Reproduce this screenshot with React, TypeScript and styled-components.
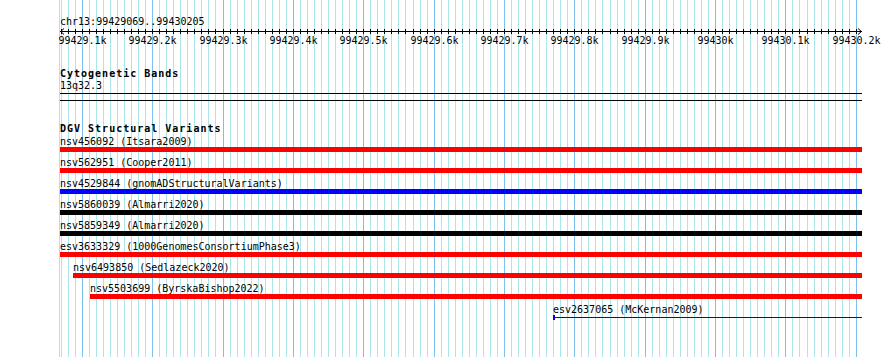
import styled, { createGlobalStyle } from 'styled-components';

const VIEW_START = 99429069
const VIEW_END = 99430205
const PX_PER_BP = 0.7036
const VIEW_W = 802
const LEFT = 60

const toX = (bp: number) => (bp - VIEW_START) * PX_PER_BP

type Feature = {
    name: string
    study: string
    start: number
    end: number
    color: string
    thin?: boolean
}

const features: Feature[] = [
    { name: 'nsv456092', study: 'Itsara2009', start: 99428900, end: 99431000, color: '#ff0000' },
    { name: 'nsv562951', study: 'Cooper2011', start: 99428700, end: 99431200, color: '#ff0000' },
    { name: 'nsv4529844', study: 'gnomADStructuralVariants', start: 99428800, end: 99430900, color: '#0000ff' },
    { name: 'nsv5860039', study: 'Almarri2020', start: 99428600, end: 99431100, color: '#000000' },
    { name: 'nsv5859349', study: 'Almarri2020', start: 99428650, end: 99431150, color: '#000000' },
    { name: 'esv3633329', study: '1000GenomesConsortiumPhase3', start: 99429000, end: 99430800, color: '#ff0000' },
    { name: 'nsv6493850', study: 'Sedlazeck2020', start: 99429087, end: 99430700, color: '#ff0000' },
    { name: 'nsv5503699', study: 'ByrskaBishop2022', start: 99429112, end: 99430650, color: '#ff0000' },
    { name: 'esv2637065', study: 'McKernan2009', start: 99429770, end: 99431500, color: '#0000ff', thin: true },
]

const GlobalStyle = createGlobalStyle`
    html, body {
        margin: 0;
        padding: 0;
        background: #fff;
    }
    body {
        font-family: "DejaVu Sans Mono", "Liberation Mono", monospace;
        color: #000;
    }
`

const Page = styled.div`
    position: relative;
    width: 890px;
    height: 357px;
    overflow: hidden;
    background: #fff;
`

// grid lines sit behind all the tracks
const GridLayer = styled.svg`
    position: absolute;
    left: 0;
    top: 0;
    z-index: 0;
`

const Content = styled.div`
    position: relative;
    z-index: 1;
    display: flex;
    flex-direction: column;
    width: ${VIEW_W}px;
    padding: 16px 0 0 ${LEFT}px;
`

const Location = styled.div`
    font-size: 10px;
    line-height: 12px;
    white-space: nowrap;
`

const RulerSvg = styled.svg`
    display: block;
    overflow: visible;
`

const Track = styled.div<{ $gap: number }>`
    display: flex;
    flex-direction: column;
    margin-top: ${({ $gap }) => $gap}px;
`

const TrackTitle = styled.div`
    font-size: 10px;
    font-weight: bold;
    letter-spacing: 1px;
    line-height: 12px;
    white-space: nowrap;
`

const BandLabel = styled.div`
    font-size: 10px;
    line-height: 12px;
`

const Band = styled.div`
    margin-top: 1px;
    height: 6px;
    border-top: 1px solid #000;
    border-bottom: 1px solid #000;
`

const FeatureList = styled.div`
    display: flex;
    flex-direction: column;
    margin-top: 1px;
    overflow: hidden;
`

const FeatureRow = styled.div`
    display: flex;
    flex-direction: column;
    height: 21px;
`

const FeatureLabel = styled.div`
    font-size: 10px;
    line-height: 11px;
    height: 11px;
    white-space: nowrap;
`

const Bar = styled.div<{ $color: string; $thin?: boolean }>`
    display: flex;
    align-items: center;
    height: 5px;
    background: ${({ $color, $thin }) => ($thin ? 'transparent' : $color)};
`

const StartMark = styled.div<{ $color: string }>`
    width: 2px;
    height: 5px;
    background: ${({ $color }) => $color};
`

const ThinLine = styled.div<{ $color: string }>`
    flex: 1;
    height: 1px;
    background: ${({ $color }) => $color};
`

function Grid() {
    const lines = [{ x: 59.5, major: false }]
    for (let bp = 99429070; bp <= 99430200; bp += 10) {
        lines.push({ x: Math.round(LEFT + toX(bp)) + 0.5, major: bp % 100 === 0 })
    }
    return (
        <GridLayer width={890} height={357}>
            {lines.map((l, i) => (
                <line key={i} x1={l.x} x2={l.x} y1={0} y2={357}
                    stroke={l.major ? '#7cc0ee' : '#aae6ea'} strokeWidth={1} />
            ))}
        </GridLayer>
    )
}

function Ruler() {
    const ticks: { x: number; bp: number }[] = []
    for (let bp = 99429070; bp <= 99430200; bp += 10) {
        ticks.push({ x: Math.round(toX(bp)) + 0.5, bp })
    }
    return (
        <RulerSvg width={VIEW_W} height={22}>
            <line x1={0} x2={VIEW_W} y1={3.5} y2={3.5} stroke="#000" />
            <polyline points="4,0.5 0.5,3.5 4,6.5" fill="none" stroke="#000" />
            <polyline points={`${VIEW_W - 4},0.5 ${VIEW_W - 0.5},3.5 ${VIEW_W - 4},6.5`} fill="none" stroke="#000" />
            {ticks.map(t => (
                <line key={t.bp} x1={t.x} x2={t.x} y1={1} y2={6} stroke="#000" />
            ))}
            {ticks.filter(t => t.bp % 100 === 0).map(t => (
                <text key={'l' + t.bp} x={t.x} y={16} textAnchor="middle"
                    fontSize={10} fontFamily='"DejaVu Sans Mono", monospace'>
                    {`${t.bp / 1000}k`}
                </text>
            ))}
        </RulerSvg>
    )
}

function FeatureItem({ f }: { f: Feature }) {
    const left = Math.max(0, Math.round(toX(f.start)))
    const right = Math.min(VIEW_W, Math.round(toX(f.end)))
    return (
        <FeatureRow>
            <FeatureLabel style={{ paddingLeft: left }}>
                {f.name} ({f.study})
            </FeatureLabel>
            <Bar $color={f.color} $thin={f.thin} style={{ marginLeft: left, width: right - left }}>
                {f.thin && <>
                    <StartMark $color={f.color} />
                    <ThinLine $color={f.color} />
                </>}
            </Bar>
        </FeatureRow>
    )
}

export default function App() {
    return (
        <Page>
            <GlobalStyle />
            <Grid />
            <Content>
                <Location>chr13:{VIEW_START}..{VIEW_END}</Location>
                <Ruler />
                <Track $gap={18}>
                    <TrackTitle>Cytogenetic Bands</TrackTitle>
                    <BandLabel>13q32.3</BandLabel>
                    <Band />
                </Track>
                <Track $gap={22}>
                    <TrackTitle>DGV Structural Variants</TrackTitle>
                    <FeatureList>
                        {features.map(f => <FeatureItem key={f.name} f={f} />)}
                    </FeatureList>
                </Track>
            </Content>
        </Page>
    )
}
